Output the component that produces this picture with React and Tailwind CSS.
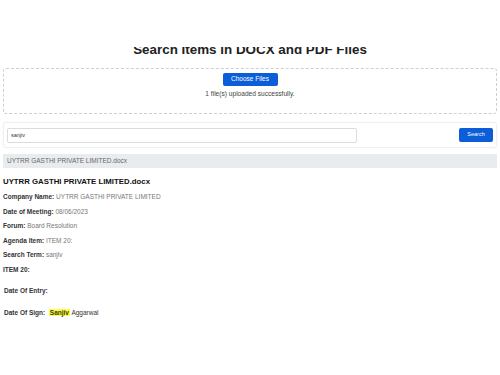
export default function App() {
  return (
    <div className="relative w-[500px] h-[375px] overflow-hidden bg-white font-['Liberation_Sans',Arial,sans-serif] text-[#222]">
      {/* white bar over the top of the scrolled page */}
      <div className="absolute top-0 left-0 right-0 h-[47px] bg-white z-10" />

      <div className="px-[3px]">
        <h1 className="text-center text-[13.4px] font-bold leading-[16px] mt-[42px] text-[#222]">
          Search Items in DOCX and PDF Files
        </h1>

        <div className="mt-[10px] h-[46px] border border-dashed border-[#cfcfcf] rounded-[3px] flex flex-col items-center pt-[4px]">
          <button className="h-[13px] w-[55px] bg-[#0b5ed7] text-white text-[6.5px] rounded-[2px] leading-none">
            Choose Files
          </button>
          <p className="text-[6.6px] text-[#444] mt-[4px] leading-[8px]">1 file(s) uploaded successfully.</p>
        </div>

        <div className="mt-[8px] h-[26px] border border-[#f0f0f0] rounded-[3px] shadow-[0_0_2px_rgba(0,0,0,0.06)] flex items-center justify-between px-[3px]">
          <input
            defaultValue="sanjiv"
            className="w-[350px] h-[15px] border border-[#dcdcdc] rounded-[2px] px-[3px] text-[5.5px] text-[#333] outline-none"
          />
          <button className="w-[34px] h-[14px] bg-[#0b5ed7] text-white text-[5.5px] rounded-[2px] leading-none">
            Search
          </button>
        </div>

        <div className="mt-[6px] h-[14px] bg-[#e9ecef] flex items-center px-[4px] text-[6.5px] text-[#666]">
          UYTRR GASTHI PRIVATE LIMITED.docx
        </div>

        <h2 className="mt-[9px] text-[7.8px] font-bold leading-[10px] text-[#111]">UYTRR GASTHI PRIVATE LIMITED.docx</h2>

        <div className="mt-[6px] flex flex-col gap-[6.5px] text-[6.5px] leading-[8px]">
          <p><span className="font-bold text-[#333]">Company Name:</span> <span className="text-[#777]">UYTRR GASTHI PRIVATE LIMITED</span></p>
          <p><span className="font-bold text-[#333]">Date of Meeting:</span> <span className="text-[#777]">08/06/2023</span></p>
          <p><span className="font-bold text-[#333]">Forum:</span> <span className="text-[#777]">Board Resolution</span></p>
          <p><span className="font-bold text-[#333]">Agenda Item:</span> <span className="text-[#777]">ITEM 20:</span></p>
          <p><span className="font-bold text-[#333]">Search Term:</span> <span className="text-[#777]">sanjiv</span></p>
          <p className="font-bold text-[#333]">ITEM 20:</p>
        </div>

        <div className="mt-[13px] pl-[1px] text-[6.5px] leading-[8px] text-[#333]">
          <p className="font-bold">Date Of Entry:</p>
          <p className="mt-[14px]">
            <span className="font-bold">Date Of Sign:</span>&nbsp;&nbsp;<span className="bg-[#ffff33] px-[1px] font-bold">Sanjiv</span> Aggarwal
          </p>
        </div>
      </div>
    </div>
  );
}
